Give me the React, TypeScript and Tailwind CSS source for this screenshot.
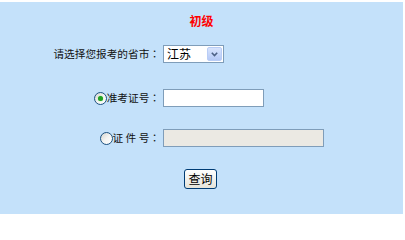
import React from "react";

const font = { fontFamily: '"Noto Sans CJK SC", "Liberation Sans", sans-serif' };

function Colon() {
  return (
    <span className="font-['Noto_Sans_CJK_JP',sans-serif]">：</span>
  );
}

function Radio({ checked }: { checked?: boolean }) {
  return (
    <span className="relative inline-flex w-[13px] h-[13px] shrink-0 rounded-full border border-[#1c5180] bg-gradient-to-br from-[#d4d4ce] via-[#f4f4f2] to-white items-center justify-center">
      {checked && (
        <span className="w-[5px] h-[5px] rounded-full bg-[#21a121] shadow-[0_0_1px_#5fd35f]" />
      )}
    </span>
  );
}

export default function App() {
  return (
    <div className="w-[405px] h-[216px] bg-white pt-[2px]" style={font}>
      <div className="w-[403px] h-[212px] bg-[#c4e1fa] flex flex-col text-black">
        <div className="mt-[13px] h-[12px] leading-[12px] text-center text-[12px] font-bold text-[#ff0000]">
          初级
        </div>

        <div className="mt-[18px] flex items-center h-[18px]">
          <div className="w-[160px] text-right text-[10.67px] leading-[18px] text-[#111]">
            请选择您报考的省市<Colon />
          </div>
          <div className="ml-[3px] w-[61px] h-[18px] border border-[#7f9db9] bg-white flex items-center justify-between pl-[3px] pr-[1px]">
            <span className="text-[12px] leading-[14px]">江苏</span>
            <span className="w-[15px] h-[14px] rounded-[2px] bg-gradient-to-b from-[#d8e4fd] to-[#b5c9f6] border border-[#b9cdf6] flex items-center justify-center">
              <svg width="7" height="5" viewBox="0 0 7 5">
                <path d="M0.8 0.8 L3.5 3.5 L6.2 0.8" fill="none" stroke="#4d6185" strokeWidth="1.6" />
              </svg>
            </span>
          </div>
        </div>

        <div className="mt-[26px] flex items-center h-[18px]">
          <div className="w-[160px] flex justify-end items-center text-[10.67px] leading-[18px] text-[#111]">
            <Radio checked />
            <span>准考证号<Colon /></span>
          </div>
          <div className="ml-[3px] w-[101px] h-[18px] border border-[#7f9db9] bg-white" />
        </div>

        <div className="mt-[22px] flex items-center h-[18px]">
          <div className="w-[160px] flex justify-end items-center text-[10.67px] leading-[18px] text-[#111]">
            <Radio />
            <span className="whitespace-pre">证 件 号<Colon /></span>
          </div>
          <div className="ml-[3px] w-[161px] h-[18px] border border-[#7f9db9] bg-[#ebe9e3]" />
        </div>

        <div className="mt-[22px] flex justify-center">
          <button className="ml-[-2px] w-[33px] h-[20px] rounded-[3px] border border-[#003c74] bg-gradient-to-b from-white to-[#e6e4da] text-[12px] leading-[18px] text-black">
            查询
          </button>
        </div>
      </div>
    </div>
  );
}
